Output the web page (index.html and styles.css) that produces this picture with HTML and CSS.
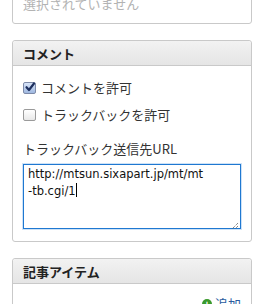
FILE: index.html
```html
<!DOCTYPE html>
<html lang="ja">
<head>
<meta charset="utf-8">
<link rel="stylesheet" href="styles.css">
</head>
<body>
<div class="panel panel-top">
  <div class="panel-body">
    <p class="muted">選択されていません</p>
  </div>
</div>

<div class="panel">
  <div class="panel-header"><h2>コメント</h2></div>
  <div class="panel-body comment-body">
    <label class="check"><span class="box checked"><svg viewBox="0 0 12 12" width="12" height="12"><path d="M2.5 6.2 L5 9 L10 2.5" fill="none" stroke="#1d2f5e" stroke-width="2.2" stroke-linecap="round" stroke-linejoin="round"/></svg></span>コメントを許可</label>
    <label class="check"><span class="box"></span>トラックバックを許可</label>
    <div class="field-label">トラックバック送信先URL</div>
    <div class="textarea">http://mtsun.sixapart.jp/mt/mt<br>-tb.cgi/1<span class="caret"></span><span class="grip"><svg viewBox="0 0 9 9" width="9" height="9"><path d="M8 2 L2 8 M8 5 L5 8" stroke="#555" stroke-width="1" fill="none" stroke-dasharray="1 1"/></svg></span></div>
  </div>
</div>

<div class="panel">
  <div class="panel-header"><h2>記事アイテム</h2></div>
  <div class="panel-body items-body">
    <a class="add"><span class="plus">+</span>追加</a>
  </div>
</div>
</body>
</html>
```

FILE: styles.css
```css
html, body {
  margin: 0;
  padding: 0;
  background: #fff;
  font-family: "Noto Sans CJK JP", "DejaVu Sans", sans-serif;
  color: #333;
  overflow: hidden;
}

.panel {
  border: 1px solid #c9c9c9;
  border-radius: 3px;
  margin: 0 15px 16px 12px;
  background: #fff;
}

.panel-top {
  margin-top: -17px;
}

.panel-body {
  padding: 0 10px;
}

.muted {
  margin: 0;
  padding: 12px 0 11px;
  font-size: 13px;
  line-height: 16px;
  color: #b3b3b3;
}

.panel-header {
  height: 24px;
  border-bottom: 1px solid #c9c9c9;
  background: linear-gradient(#f2f2f2, #e5e5e5);
  border-radius: 3px 3px 0 0;
  display: flex;
  align-items: center;
  padding: 0 10px;
}

.panel-header h2 {
  margin: 0;
  font-size: 13px;
  font-weight: bold;
  color: #222;
}

.comment-body {
  padding-top: 14px;
  padding-bottom: 12px;
}

.check {
  display: flex;
  align-items: center;
  font-size: 13px;
  line-height: 16px;
  height: 16px;
  margin-bottom: 11px;
}

.box {
  width: 11px;
  height: 10px;
  border: 1px solid #9a9a9a;
  border-radius: 2px;
  background: linear-gradient(#fff, #e8e8e8);
  margin-right: 5px;
  position: relative;
  flex: none;
}

.box.checked {
  border-color: #7d8aa8;
  background: linear-gradient(#d8e4f8, #9fb8e0);
}

.box svg {
  position: absolute;
  left: 0;
  top: -2px;
}

.field-label {
  font-size: 13px;
  line-height: 16px;
  margin-top: 18px;
  margin-bottom: 7px;
}

.textarea {
  position: relative;
  height: 62px;
  border: 1px solid #1f78d1;
  box-shadow: 0 0 0 1px rgba(90, 160, 230, 0.3);
  padding: 1px 4px 0;
  font-family: "DejaVu Sans", sans-serif;
  font-size: 11.5px;
  line-height: 17px;
  color: #111;
}

.caret {
  display: inline-block;
  width: 1px;
  height: 14px;
  background: #000;
  vertical-align: -2px;
}

.grip {
  position: absolute;
  right: 1px;
  bottom: 1px;
  width: 9px;
  height: 9px;
}

.items-body {
  display: flex;
  justify-content: flex-end;
  padding-top: 12px;
}

.add {
  display: flex;
  align-items: center;
  font-size: 13px;
  line-height: 16px;
  color: #2a5d9f;
}

.plus {
  width: 10px;
  height: 10px;
  border-radius: 50%;
  background: #3a9a2c;
  color: #fff;
  font-size: 10px;
  line-height: 10px;
  text-align: center;
  font-weight: bold;
  margin-right: 3px;
}
```
